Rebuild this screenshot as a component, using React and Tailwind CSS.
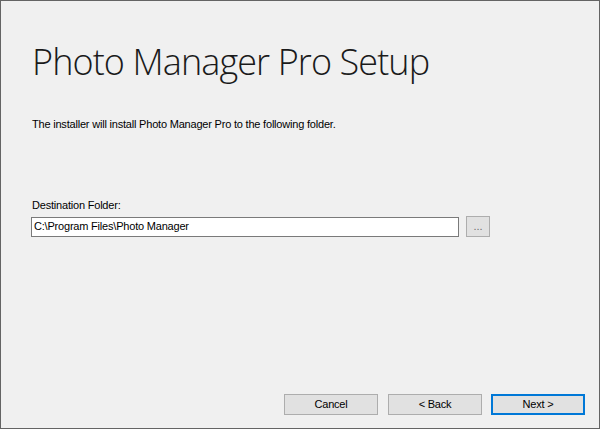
export default function App() {
  const ui = { fontFamily: '"Liberation Sans", Arial, sans-serif' };
  return (
    <div className="w-[600px] h-[429px] bg-[#f0f0f0] border border-[#646464] flex flex-col text-black" style={ui}>
      <div className="pl-[31px] pt-[37px]">
        <h1 className="text-[36px] leading-[48px] font-light tracking-[-0.9px] text-[#1a1a1a]" style={{ fontFamily: '"Open Sans", "Noto Sans", sans-serif' }}>
          Photo Manager Pro Setup
        </h1>
      </div>
      <p className="pl-[31px] mt-[31px] text-[11px] leading-[14px] tracking-[-0.2px]">
        The installer will install Photo Manager Pro to the following folder.
      </p>
      <div className="pl-[31px] mt-[67px] text-[11px] leading-[14px] tracking-[-0.2px]">Destination Folder:</div>
      <div className="flex items-center pl-[30px] mt-[4px]">
        <div className="w-[428px] h-[20px] bg-white border border-[#7a7a7a] flex items-center pl-[2px] text-[11px] tracking-[-0.2px]">
          C:\Program Files\Photo Manager
        </div>
        <button className="ml-[7px] w-[24px] h-[21px] bg-[#e1e1e1] border border-[#adadad] text-[11px] text-[#6d6d6d] flex items-center justify-center leading-none">
          ...
        </button>
      </div>
      <div className="mt-auto mb-[13px] flex justify-end pr-[14px]">
        <button className="w-[94px] h-[21px] bg-[#e1e1e1] border border-[#adadad] text-[11px] tracking-[-0.2px]">Cancel</button>
        <button className="ml-[10px] w-[94px] h-[21px] bg-[#e1e1e1] border border-[#adadad] text-[11px] tracking-[-0.2px]">&lt; Back</button>
        <button className="ml-[9px] w-[94px] h-[21px] bg-[#e1e1e1] border-2 border-[#0078d7] text-[11px] tracking-[-0.2px]">Next &gt;</button>
      </div>
    </div>
  );
}
